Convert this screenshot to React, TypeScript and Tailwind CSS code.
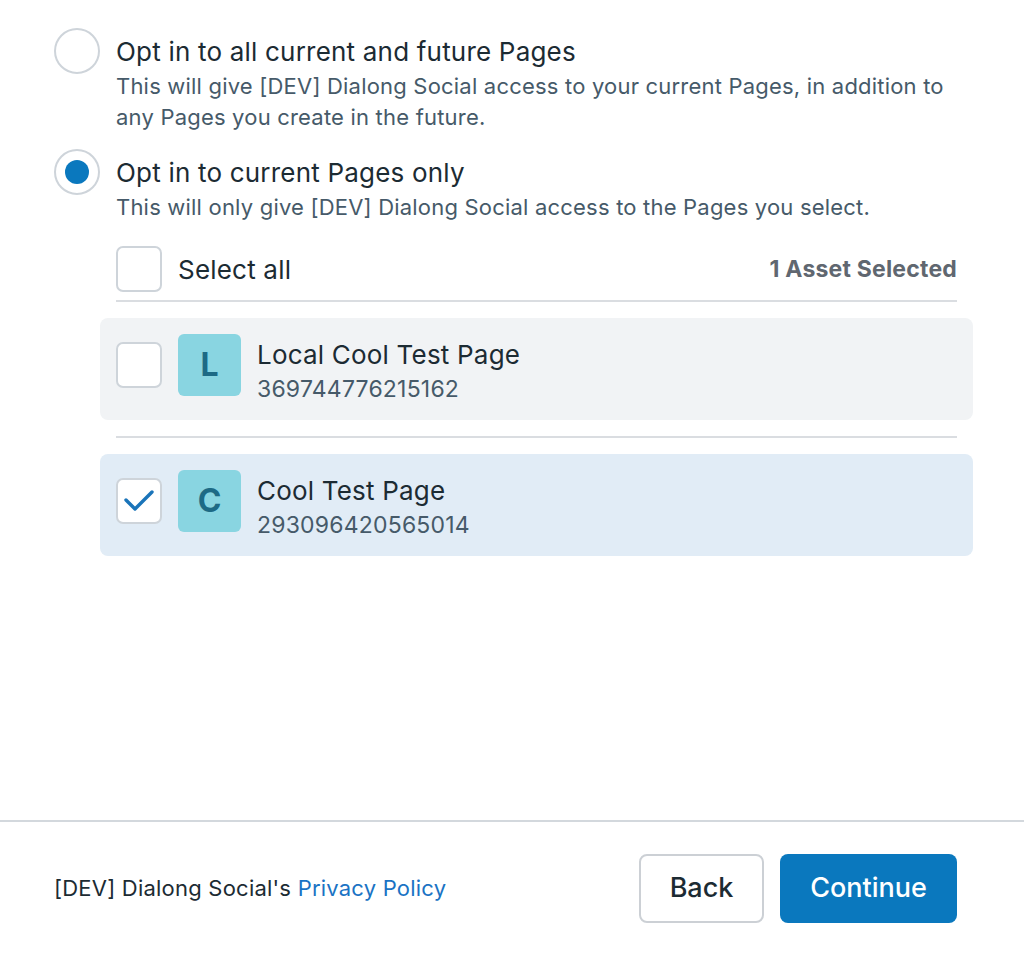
import React from 'react'

function Radio({ checked }: { checked?: boolean }) {
  return (
    <div className="w-[46px] h-[46px] shrink-0 rounded-full border-2 border-[#ced4da] bg-white flex items-center justify-center">
      {checked && <div className="w-[24px] h-[24px] rounded-full bg-[#0a78be]" />}
    </div>
  )
}

function Checkbox({ checked }: { checked?: boolean }) {
  return (
    <div className="w-[46px] h-[46px] shrink-0 rounded-[7px] border-2 border-[#ced4da] bg-white flex items-center justify-center">
      {checked && (
        <svg width="42" height="42" viewBox="0 0 42 42" fill="none">
          <path d="M8 20l9 9L34 12" stroke="#1a74b9" strokeWidth="3.4" strokeLinecap="round" strokeLinejoin="round" />
        </svg>
      )}
    </div>
  )
}

function PageItem({ letter, name, id, checked }: { letter: string; name: string; id: string; checked?: boolean }) {
  return (
    <div className={`flex items-start gap-4 rounded-[8px] px-4 pt-4 pb-6 ${checked ? 'bg-[#e1ecf6]' : 'bg-[#f1f3f5]'}`}>
      <div className="pt-2">
        <Checkbox checked={checked} />
      </div>
      <div className="w-[63px] h-[62px] shrink-0 rounded-[6px] bg-[#89d5e1] flex items-center justify-center text-[32px] font-bold text-[#1d6a85]">
        {letter}
      </div>
      <div className="h-[62px] pt-[7px]">
        <div className="text-[26px] leading-[28px] tracking-[0.2px] text-[#1c2b33]">{name}</div>
        <div className="mt-[6px] text-[23px] leading-[28px] tracking-[0.2px] text-[#465a69]">{id}</div>
      </div>
    </div>
  )
}

export default function App() {
  return (
    <div className="min-h-screen flex flex-col bg-white font-['Inter',sans-serif]">
      <div className="flex-1 pt-[28px] pl-[54px] pr-[51px]">
        {/* Option 1 */}
        <div className="flex items-start gap-4 pr-4">
          <Radio />
          <div className="pt-[7px]">
            <div className="text-[26px] leading-[34px] mb-[2px] tracking-[0.2px] text-[#1c2b33]">Opt in to all current and future Pages</div>
            <div className="text-[22px] leading-[31px] tracking-[0.2px] text-[#465a69]">
              This will give [DEV] Dialong Social access to your current Pages, in addition to any Pages you create in the future.
            </div>
          </div>
        </div>

        {/* Option 2 */}
        <div className="flex items-start gap-4 mt-[16px] pr-4">
          <Radio checked />
          <div className="pt-[7px]">
            <div className="text-[26px] leading-[34px] mb-[2px] tracking-[0.2px] text-[#1c2b33]">Opt in to current Pages only</div>
            <div className="text-[22px] leading-[31px] tracking-[0.2px] text-[#465a69]">
              This will only give [DEV] Dialong Social access to the Pages you select.
            </div>
          </div>
        </div>

        {/* Page list */}
        <div className="ml-[46px] mt-[23px]">
          <div className="mx-4 flex items-center gap-4 pb-2 border-b-2 border-[#dadde1]">
            <Checkbox />
            <span className="flex-1 text-[26px] tracking-[0.2px] text-[#1c2b33]">Select all</span>
            <span className="text-[23px] font-bold tracking-[0.2px] text-[#606770]">1 Asset Selected</span>
          </div>
          <div className="mt-4">
            <PageItem letter="L" name="Local Cool Test Page" id="369744776215162" />
          </div>
          <div className="mx-4 my-4 border-b-2 border-[#dadde1]" />
          <PageItem letter="C" name="Cool Test Page" id="293096420565014" checked />
        </div>
      </div>

      {/* Footer */}
      <div className="border-t-2 border-[#d3d8dd] pl-[54px] pr-[67px] pt-8 pb-[34px] flex items-center">
        <div className="flex-1 text-[22px] tracking-[0.01em] text-[#1c2b33]">
          [DEV] Dialong Social's <a href="#" className="text-[#1a73c4]">Privacy Policy</a>
        </div>
        <button className="h-[69px] w-[125px] rounded-[8px] border-2 border-[#ccd0d5] bg-white text-[27px] font-medium text-[#1c2b33]">
          Back
        </button>
        <button className="ml-4 h-[69px] w-[177px] rounded-[8px] bg-[#0a78be] text-[27px] font-medium text-white">
          Continue
        </button>
      </div>
    </div>
  )
}
